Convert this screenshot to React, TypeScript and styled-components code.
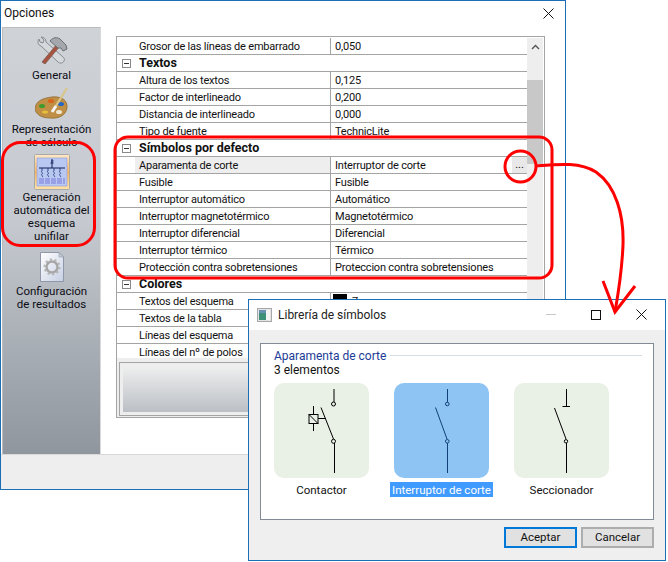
import React from 'react';
import styled, { createGlobalStyle } from 'styled-components';

const GlobalStyle = createGlobalStyle`
  html, body { margin: 0; padding: 0; background: #fff; }
  body { font-family: Roboto, "Noto Sans", sans-serif; font-size: 11.5px; color: #111; }
  * { box-sizing: border-box; }
`;

const Page = styled.div`
  position: relative;
  width: 668px;
  height: 562px;
  overflow: hidden;
  background: #fff;
`;

const OptionsWindow = styled.div`
  width: 566px;
  height: 490px;
  border: 1px solid #1c6fb4;
  display: flex;
  flex-direction: column;
  background: #fff;
`;

const TitleBar = styled.div`
  height: 26px;
  flex: none;
  display: flex;
  align-items: center;
  justify-content: space-between;
  padding: 0 11px 2px 3px;
  font-size: 12px;
`;

const WindowBody = styled.div`
  flex: 1;
  display: flex;
  padding-left: 1px;
  border-bottom: 1px solid #d9d9d9;
`;

const Sidebar = styled.div`
  width: 99px;
  flex: none;
  border-right: 1px solid #d9d9d9;
  border-left: 1px solid #bcbcbc;
  border-top: 1px solid #bcbcbc;
  background: linear-gradient(#cfd3d8, #c6cad0 45%, #8f969e);
  padding-top: 8px;
  display: flex;
  flex-direction: column;
`;

const SideItem = styled.div<{ $mb: number }>`
  display: flex;
  flex-direction: column;
  align-items: center;
  text-align: center;
  line-height: 13px;
  color: #0c0c14;
  font-size: 11.5px;
  margin-bottom: ${p => p.$mb}px;
`;

const SideLabel = styled.div<{ $mt: number }>`
  margin-top: ${p => p.$mt}px;
  white-space: pre-line;
`;

const Content = styled.div`
  flex: 1;
  padding: 9px 0 0 15px;
`;

const PropertyGrid = styled.div`
  width: 429px;
  height: 382px;
  border: 1px solid #a4a4a4;
  display: flex;
  flex-direction: column;
`;

const GridTop = styled.div`
  height: 321px;
  flex: none;
  display: flex;
  overflow: hidden;
`;

const RowList = styled.div`
  width: 410px;
  flex: none;
  padding-top: 1px;
`;

const Row = styled.div`
  height: 17px;
  display: flex;
  border-bottom: 1px solid #a4a4a4;
  line-height: 18px;
  font-size: 11px;
  letter-spacing: -0.2px;
  white-space: nowrap;
`;

const Gutter = styled.div`
  width: 18px;
  flex: none;
  display: flex;
  align-items: center;
  padding-left: 5px;
`;

const Toggle = styled.div`
  width: 9px;
  height: 9px;
  border: 1px solid #8a8a8a;
  display: flex;
  align-items: center;
  justify-content: center;
  &::before {
    content: '';
    width: 5px;
    height: 1px;
    background: #333;
  }
`;

const NameCell = styled.div<{ $active?: boolean }>`
  width: 195px;
  flex: none;
  padding-left: 4px;
  background: ${p => (p.$active ? '#eeeeee' : 'transparent')};
`;

const CategoryName = styled.div`
  padding-left: 4px;
  font-weight: 700;
  font-size: 12.5px;
  line-height: 16px;
  letter-spacing: 0;
`;

const ValueCell = styled.div`
  flex: 1;
  display: flex;
  align-items: flex-start;
  justify-content: space-between;
  border-left: 1px solid #a4a4a4;
  padding-left: 4px;
  min-width: 0;
`;

const Swatch = styled.span`
  width: 14px;
  height: 12px;
  margin: 1px 5px 0 -2px;
  background: #000;
  flex: none;
`;

const ColorValue = styled.span`
  display: flex;
  align-items: flex-start;
`;

const DotsButton = styled.div`
  width: 15px;
  height: 16px;
  background: #e8e8e8;
  text-align: center;
  line-height: 15px;
  letter-spacing: 0;
`;

const ScrollTrack = styled.div`
  width: 16px;
  flex: none;
  background: #eeeeee;
  margin-top: 1px;
  position: relative;
`;

const ScrollArrow = styled.div`
  height: 17px;
  display: flex;
  align-items: center;
  justify-content: center;
`;

const ScrollThumb = styled.div`
  height: 84px;
  margin-top: 25px;
  background: #c8c8c8;
`;

const HelpPanel = styled.div`
  flex: 1;
  background: #eeeeee;
  padding: 4px 2px 1px 2px;
  display: flex;
`;

const HelpFrame = styled.div`
  flex: 1;
  border: 1px solid #a4a4a4;
  padding: 2px 3px 3px 3px;
  display: flex;
`;

const HelpFill = styled.div`
  flex: 1;
  background: linear-gradient(#f0f0f0, #bbbfc5);
`;

const Footer = styled.div`
  height: 34px;
  flex: none;
  background: #eeeeee;
`;

const Dialog = styled.div`
  position: absolute;
  left: 248px;
  top: 299px;
  width: 418px;
  height: 262px;
  border: 1px solid #1c6fb4;
  background: #efefef;
  display: flex;
  flex-direction: column;
`;

const DialogTitle = styled.div`
  height: 30px;
  flex: none;
  background: #fff;
  display: flex;
  align-items: center;
  padding: 0 18px 1px 8px;
  gap: 6px;
  font-size: 12px;
  color: #222;
`;

const DialogName = styled.span`
  flex: 1;
`;

const MinGlyph = styled.span`
  width: 10px;
  height: 1px;
  background: #c8c8c8;
  margin-right: 29px;
`;

const MaxGlyph = styled.span`
  width: 10px;
  height: 10px;
  border: 1px solid #111;
  margin-right: 29px;
`;

const DialogBody = styled.div`
  flex: 1;
  padding: 13px 11px 12px 11px;
  display: flex;
  flex-direction: column;
`;

const Group = styled.div`
  height: 177px;
  flex: none;
  border: 1px solid #828a94;
  background: #fff;
  padding: 4px 11px 0 13px;
`;

const GroupHeader = styled.div`
  display: flex;
  align-items: center;
  gap: 4px;
  height: 15px;
  color: #1a3c96;
  font-size: 12px;
  white-space: nowrap;
`;

const GroupRule = styled.div`
  flex: 1;
  height: 1px;
  background: #d5dfe6;
`;

const GroupCount = styled.div`
  line-height: 15px;
  font-size: 12px;
`;

const Tiles = styled.div`
  display: flex;
  gap: 25px;
  margin-top: 5px;
`;

const TileItem = styled.div`
  width: 95px;
  display: flex;
  flex-direction: column;
  align-items: center;
  gap: 4px;
`;

const Tile = styled.div<{ $selected?: boolean }>`
  width: 95px;
  height: 95px;
  border-radius: 10px;
  background: ${p => (p.$selected ? '#8ec4f3' : '#e9f0e5')};
`;

const TileLabel = styled.div<{ $selected?: boolean }>`
  height: 15px;
  line-height: 16px;
  padding: 0 2px;
  white-space: nowrap;
  background: ${p => (p.$selected ? '#3f9bff' : 'transparent')};
  color: ${p => (p.$selected ? '#fff' : '#111')};
`;

const ButtonRow = styled.div`
  display: flex;
  justify-content: flex-end;
  gap: 4px;
  margin-top: 7px;
`;

const DialogButton = styled.div<{ $primary?: boolean }>`
  width: 73px;
  height: 21px;
  background: #e1e1e1;
  border: 2px solid ${p => (p.$primary ? '#0078d7' : '#adadad')};
  text-align: center;
  line-height: 17px;
  font-size: 11.5px;
`;

const Annotations = styled.svg`
  position: absolute;
  left: 0;
  top: 0;
  pointer-events: none;
`;

type GridRow =
  | { kind: 'cat'; name: string }
  | { kind: 'prop'; name: string; value?: string; active?: boolean; color?: boolean };

const rows: GridRow[] = [
  { kind: 'prop', name: 'Grosor de las líneas de embarrado', value: '0,050' },
  { kind: 'cat', name: 'Textos' },
  { kind: 'prop', name: 'Altura de los textos', value: '0,125' },
  { kind: 'prop', name: 'Factor de interlineado', value: '0,200' },
  { kind: 'prop', name: 'Distancia de interlineado', value: '0,000' },
  { kind: 'prop', name: 'Tipo de fuente', value: 'TechnicLite' },
  { kind: 'cat', name: 'Símbolos por defecto' },
  { kind: 'prop', name: 'Aparamenta de corte', value: 'Interruptor de corte', active: true },
  { kind: 'prop', name: 'Fusible', value: 'Fusible' },
  { kind: 'prop', name: 'Interruptor automático', value: 'Automático' },
  { kind: 'prop', name: 'Interruptor magnetotérmico', value: 'Magnetotérmico' },
  { kind: 'prop', name: 'Interruptor diferencial', value: 'Diferencial' },
  { kind: 'prop', name: 'Interruptor térmico', value: 'Térmico' },
  { kind: 'prop', name: 'Protección contra sobretensiones', value: 'Proteccion contra sobretensiones' },
  { kind: 'cat', name: 'Colores' },
  { kind: 'prop', name: 'Textos del esquema', value: '7', color: true },
  { kind: 'prop', name: 'Textos de la tabla' },
  { kind: 'prop', name: 'Líneas del esquema' },
  { kind: 'prop', name: 'Líneas del nº de polos' },
];

const CloseGlyph = () => (
  <svg width="11" height="11" viewBox="0 0 11 11">
    <path d="M0.5 0.5 L10.5 10.5 M10.5 0.5 L0.5 10.5" stroke="#111" strokeWidth="1" fill="none" />
  </svg>
);

const ToolsIcon = () => (
  <svg width="32" height="28" viewBox="0 0 32 28">
    <path d="M3 3 C1 6 2 9 5 10 L22 26 C24 28 27 27 28 25 C29 23 28 22 27 21 L10 6 C10 3 8 1 5 1 L8 4 L7 7 L4 6 Z" fill="#d6d9dc" stroke="#858b91" strokeWidth="1" />
    <path d="M6 26 L21 8 L24 10 L9 28 Z" fill="#a8533f" stroke="#7a5a52" strokeWidth="0.8" />
    <path d="M14 5 C17 1 21 1 24 3 L30 9 L31 13 L27 15 L25 12 L22 12 Z" fill="#a4a8ad" stroke="#6b7075" strokeWidth="1" />
  </svg>
);

const PaletteIcon = () => (
  <svg width="34" height="31" viewBox="0 0 34 31">
    <path d="M17 9 C26 8 33 12 32 20 C31 27 24 31 15 30 C6 30 0 26 0 20 C1 13 8 10 17 9 Z" fill="#c08f46" stroke="#8f6a30" strokeWidth="0.8" />
    <ellipse cx="7" cy="18" rx="3" ry="2" fill="#3f9a2c" />
    <ellipse cx="16" cy="13" rx="3" ry="2" fill="#d8641c" />
    <ellipse cx="26" cy="16" rx="3" ry="2" fill="#2468c4" />
    <ellipse cx="10" cy="24" rx="3" ry="1.6" fill="#e3c23a" />
    <ellipse cx="24" cy="24" rx="3" ry="2" fill="#f0e6d2" />
    <path d="M32 0 L19 21" stroke="#d9c48a" strokeWidth="2.2" />
    <path d="M21 18 L17 24" stroke="#f4f4f4" strokeWidth="3" />
  </svg>
);

const SchemaIcon = () => (
  <svg width="36" height="36" viewBox="0 0 36 36">
    <defs>
      <linearGradient id="schemaFrame" x1="0" y1="0" x2="0" y2="1">
        <stop offset="0" stopColor="#fde9c8" />
        <stop offset="0.5" stopColor="#f8b45e" />
        <stop offset="1" stopColor="#fde2a8" />
      </linearGradient>
    </defs>
    <rect x="0.5" y="0.5" width="35" height="35" rx="1" fill="url(#schemaFrame)" stroke="#a9a9a9" />
    <rect x="3" y="4" width="30" height="28" fill="#b8c8f0" stroke="#8e9ee0" strokeWidth="0.6" />
    <path d="M18 5 V14 M17 7 H19.5 M16.5 9 H19.5 M5 14 H31" stroke="#10205a" strokeWidth="1" fill="none" />
    <path d="M8 14 V17 C6 18 10 19 8 20 C6 21 10 22 8 23 M14 14 V17 C12 18 16 19 14 20 C12 21 16 22 14 23 M20 14 V17 C18 18 22 19 20 20 C18 21 22 22 20 23 M26 14 V17 C24 18 28 19 26 20 C24 21 28 22 26 23" stroke="#1a2c70" strokeWidth="0.8" fill="none" />
    <path d="M5 25 H31 M5 27 H31 M5 29 H31" stroke="#7c78dc" strokeWidth="1" strokeDasharray="5 1" />
  </svg>
);

const DocIcon = () => (
  <svg width="24" height="30" viewBox="0 0 24 30">
    <defs>
      <linearGradient id="docFill" x1="0" y1="0" x2="1" y2="1">
        <stop offset="0" stopColor="#ffffff" />
        <stop offset="1" stopColor="#c6cfe4" />
      </linearGradient>
    </defs>
    <path d="M0.5 0.5 H19 L23.5 5 V29.5 H0.5 Z" fill="url(#docFill)" stroke="#8f97a8" />
    <path d="M19 0.5 V5 H23.5 Z" fill="#c9ced8" stroke="#8f97a8" strokeWidth="0.6" />
    <circle cx="12" cy="15" r="5.5" fill="none" stroke="#a6a6a6" strokeWidth="2.4" />
    <circle cx="12" cy="15" r="7.5" fill="none" stroke="#b4b4b4" strokeWidth="2" strokeDasharray="2.2 2.5" />
  </svg>
);

const TitleIcon = () => (
  <svg width="15" height="14" viewBox="0 0 15 14">
    <rect x="0.5" y="0.5" width="14" height="13" fill="#e4e4e4" stroke="#a8a8a8" />
    <rect x="2" y="2" width="7" height="10" fill="#3d8f78" />
    <rect x="2" y="2" width="7" height="3" fill="#6a8fb5" />
    <rect x="9" y="2" width="4" height="10" fill="#f4f4f4" />
  </svg>
);

const ContactorSymbol = () => (
  <svg width="95" height="95" viewBox="0 0 95 95" fill="none" stroke="#000">
    <path d="M60 6 V19 M60.5 60 V90 M47 24.5 L59.5 56" strokeWidth="1" />
    <circle cx="59.5" cy="21" r="2" />
    <circle cx="59.5" cy="58.3" r="2" />
    <rect x="35" y="31.5" width="9" height="9" />
    <path d="M39.5 23 V31.5 M39.5 40.5 V48 M35 31.5 L44 40.5 M44 35.5 H52" />
  </svg>
);

const SwitchSymbol = () => (
  <svg width="95" height="95" viewBox="0 0 95 95" fill="none" stroke="#123f78">
    <path d="M53.5 6 V19 M53.5 60 V90 M41.5 24.5 L53 56" strokeWidth="1" />
    <circle cx="53.3" cy="21" r="1.8" />
    <circle cx="53.3" cy="58.3" r="1.8" />
  </svg>
);

const DisconnectorSymbol = () => (
  <svg width="95" height="95" viewBox="0 0 95 95" fill="none" stroke="#000">
    <path d="M52.5 6 V23.5 M48.5 23.5 H56 M52.5 60 V90 M40.5 25 L52 56" strokeWidth="1" />
    <circle cx="52" cy="58.3" r="1.7" />
  </svg>
);

export default function App() {
  return (
    <Page>
      <GlobalStyle />
      <OptionsWindow>
        <TitleBar>
          <span>Opciones</span>
          <CloseGlyph />
        </TitleBar>
        <WindowBody>
          <Sidebar>
            <SideItem $mb={6}>
              <ToolsIcon />
              <SideLabel $mt={5}>General</SideLabel>
            </SideItem>
            <SideItem $mb={5}>
              <PaletteIcon />
              <SideLabel $mt={4}>{'Representación\nde cálculo'}</SideLabel>
            </SideItem>
            <SideItem $mb={9}>
              <SchemaIcon />
              <SideLabel $mt={1}>{'Generación\nautomática del\nesquema\nunifilar'}</SideLabel>
            </SideItem>
            <SideItem $mb={0}>
              <DocIcon />
              <SideLabel $mt={3}>{'Configuración\nde resultados'}</SideLabel>
            </SideItem>
          </Sidebar>
          <Content>
            <PropertyGrid>
              <GridTop>
                <RowList>
                  {rows.map(row =>
                    row.kind === 'cat' ? (
                      <Row key={row.name}>
                        <Gutter>
                          <Toggle />
                        </Gutter>
                        <CategoryName>{row.name}</CategoryName>
                      </Row>
                    ) : (
                      <Row key={row.name}>
                        <Gutter />
                        <NameCell $active={row.active}>{row.name}</NameCell>
                        <ValueCell>
                          {row.color ? (
                            <ColorValue>
                              <Swatch />
                              {row.value}
                            </ColorValue>
                          ) : (
                            <span>{row.value}</span>
                          )}
                          {row.active && <DotsButton>...</DotsButton>}
                        </ValueCell>
                      </Row>
                    )
                  )}
                </RowList>
                <ScrollTrack>
                  <ScrollArrow>
                    <svg width="9" height="6" viewBox="0 0 9 6">
                      <path d="M1 5 L4.5 1.5 L8 5" stroke="#555" strokeWidth="1.4" fill="none" />
                    </svg>
                  </ScrollArrow>
                  <ScrollThumb />
                </ScrollTrack>
              </GridTop>
              <HelpPanel>
                <HelpFrame>
                  <HelpFill />
                </HelpFrame>
              </HelpPanel>
            </PropertyGrid>
          </Content>
        </WindowBody>
        <Footer />
      </OptionsWindow>

      <Dialog>
        <DialogTitle>
          <TitleIcon />
          <DialogName>Librería de símbolos</DialogName>
          <MinGlyph />
          <MaxGlyph />
          <CloseGlyph />
        </DialogTitle>
        <DialogBody>
          <Group>
            <GroupHeader>
              Aparamenta de corte
              <GroupRule />
            </GroupHeader>
            <GroupCount>3 elementos</GroupCount>
            <Tiles>
              <TileItem>
                <Tile>
                  <ContactorSymbol />
                </Tile>
                <TileLabel>Contactor</TileLabel>
              </TileItem>
              <TileItem>
                <Tile $selected>
                  <SwitchSymbol />
                </Tile>
                <TileLabel $selected>Interruptor de corte</TileLabel>
              </TileItem>
              <TileItem>
                <Tile>
                  <DisconnectorSymbol />
                </Tile>
                <TileLabel>Seccionador</TileLabel>
              </TileItem>
            </Tiles>
          </Group>
          <ButtonRow>
            <DialogButton $primary>Aceptar</DialogButton>
            <DialogButton>Cancelar</DialogButton>
          </ButtonRow>
        </DialogBody>
      </Dialog>

      <Annotations width="668" height="562" viewBox="0 0 668 562" fill="none" stroke="#ff0000" strokeWidth="3">
        <rect x="2.5" y="142.5" width="92" height="103" rx="18" />
        <rect x="115" y="137" width="437" height="141" rx="13" />
        <circle cx="520.5" cy="166.5" r="15.5" />
        <path d="M536 166 C560 164 580 162 596 172 C616 186 624 215 623 245 C622 270 618 295 615 312" />
        <path d="M603 281 L615 312 L635 286" />
      </Annotations>
    </Page>
  );
}
